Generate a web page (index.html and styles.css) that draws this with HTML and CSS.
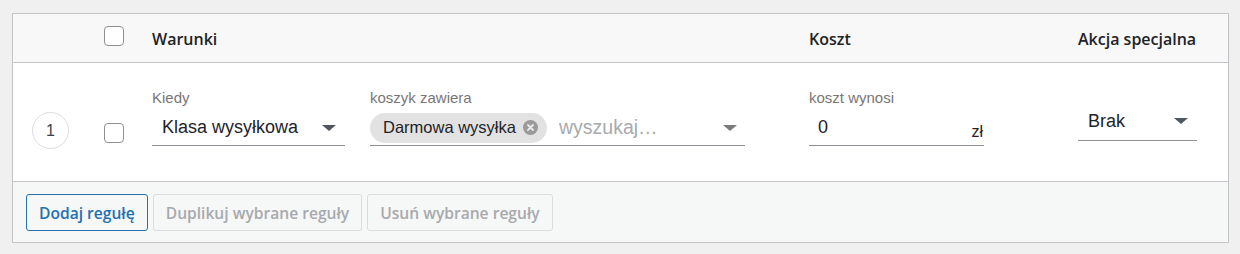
FILE: index.html
```html
<!DOCTYPE html>
<html lang="pl">
<head>
<meta charset="utf-8">
<title>Reguły</title>
<link rel="stylesheet" href="styles.css">
</head>
<body>
<div class="rules">
  <div class="rules-head">
    <div class="c-num"></div>
    <div class="c-check"><span class="cb"></span></div>
    <div class="c-cond">Warunki</div>
    <div class="c-cost">Koszt</div>
    <div class="c-act">Akcja specjalna</div>
  </div>
  <div class="rules-row">
    <div class="c-num"><span class="num">1</span></div>
    <div class="c-check"><span class="cb cb-row"></span></div>
    <div class="c-cond">
      <div class="field f-when">
        <div class="label">Kiedy</div>
        <div class="control">
          <span class="value">Klasa wysyłkowa</span>
          <span class="arrow"></span>
        </div>
      </div>
      <div class="field f-cart">
        <div class="label">koszyk zawiera</div>
        <div class="control">
          <span class="chip">Darmowa wysyłka<span class="chip-x"><svg width="15" height="15" viewBox="0 0 15 15"><circle cx="7.5" cy="7.5" r="7.5" fill="#9a9a9a"/><path d="M5 5 L10 10 M10 5 L5 10" stroke="#ececec" stroke-width="1.8" stroke-linecap="round"/></svg></span></span>
          <span class="placeholder">wyszukaj…</span>
          <span class="arrow arrow-light"></span>
        </div>
      </div>
    </div>
    <div class="c-cost">
      <div class="field f-cost">
        <div class="label">koszt wynosi</div>
        <div class="control">
          <span class="value">0</span>
          <span class="unit">zł</span>
        </div>
      </div>
    </div>
    <div class="c-act">
      <div class="field f-act">
        <div class="control">
          <span class="value">Brak</span>
          <span class="arrow"></span>
        </div>
      </div>
    </div>
  </div>
  <div class="rules-foot">
    <button class="btn btn-primary" type="button">Dodaj regułę</button>
    <button class="btn btn-disabled" type="button">Duplikuj wybrane reguły</button>
    <button class="btn btn-disabled" type="button">Usuń wybrane reguły</button>
  </div>
</div>
</body>
</html>
```
FILE: styles.css
```css
* { box-sizing: border-box; }
html, body { margin: 0; padding: 0; }
body {
  background: #f0f0f1;
  font-family: "Liberation Sans", Arial, sans-serif;
  color: #1d2327;
  padding: 13px 0 0 12px;
}
.rules {
  width: 1217px;
  border: 1px solid #c3c4c7;
  background: #fff;
  box-shadow: 0 1px 1px rgba(0,0,0,.04);
}
.rules-head, .rules-row {
  display: flex;
}
.c-num { width: 91px; flex: none; }
.c-check { width: 48px; flex: none; }
.c-cond { width: 657px; flex: none; }
.c-cost { width: 269px; flex: none; }
.c-act { width: 150px; flex: none; }

.rules-head {
  height: 49px;
  background: #f8f8f8;
  border-bottom: 1px solid #c3c4c7;
  align-items: center;
  font-family: "Open Sans", sans-serif;
  font-weight: 600;
  font-size: 16px;
  line-height: 22px;
  color: #1d2327;
}
.rules-head .c-check { display: flex; align-items: center; margin-top: -5px; }
.rules-head .c-cond, .rules-head .c-cost, .rules-head .c-act { padding-top: 1px; }

.cb {
  display: block;
  width: 20px;
  height: 20px;
  border: 1px solid #8c8f94;
  border-radius: 4px;
  background: #fff;
}
.rules-row {
  height: 119px;
  border-bottom: 1px solid #c3c4c7;
  padding-top: 26px;
  align-items: flex-start;
}
.rules-row .c-num { padding-left: 19px; padding-top: 23px; }
.num {
  display: flex;
  align-items: center;
  justify-content: center;
  width: 37px;
  height: 37px;
  border: 1px solid #dcdcde;
  border-radius: 50%;
  font-size: 16px;
  color: #3c434a;
}
.rules-row .c-check { padding-top: 34px; }

.rules-row .c-cond { display: flex; gap: 25px; }
.field { display: flex; flex-direction: column; }
.f-when { width: 193px; }
.f-cart { width: 375px; }
.f-cost { width: 175px; }
.f-act { width: 119px; margin-top: 13px; }

.label {
  font-size: 15px;
  line-height: 17px;
  color: #7b7676;
  margin-bottom: 1px;
}
.control {
  height: 39px;
  border-bottom: 1px solid #8c8f94;
  display: flex;
  align-items: center;
  padding: 0 9px 0 10px;
  font-size: 18px;
  line-height: 21px;
  color: #1d2327;
}
.f-when .control .value { padding-top: 2px; }
.value { flex: 1; }
.arrow {
  width: 0;
  height: 0;
  border-left: 7px solid transparent;
  border-right: 7px solid transparent;
  border-top: 6px solid #50575e;
  margin-top: 3px;
}
.f-act .arrow { margin-top: 0; }
.arrow-light { border-top-color: #7a7a7a; }

.f-cart .control { padding-left: 0; padding-right: 8px; }
.chip {
  display: flex;
  align-items: center;
  height: 30px;
  border-radius: 15px;
  background: #e2e2e2;
  padding: 0 9px 0 13px;
  font-size: 16.5px;
  color: #1d2327;
  margin-top: 3px;
}
.chip-x { display: flex; margin-left: 7px; }
.placeholder {
  flex: 1;
  margin-left: 12px;
  color: #a7aaad;
  font-size: 19.5px;
  margin-top: 2px;
}

.f-cost .control { padding: 0 1px 0 9px; align-items: center; }
.f-cost .value { padding-top: 2px; }
.unit {
  align-self: flex-end;
  font-size: 16px;
  line-height: 18px;
  margin-bottom: 4px;
  color: #1d2327;
}

.rules-foot {
  background: #f6f7f7;
  display: flex;
  gap: 5px;
  padding: 12px 13px 11px;
}
.btn {
  height: 37px;
  padding: 0 12px;
  border-radius: 3px;
  font-family: "Open Sans", sans-serif;
  font-weight: 600;
  font-size: 15.6px;
  background: #f6f7f7;
  cursor: pointer;
}
.btn-primary {
  border: 1px solid #2271b1;
  color: #2271b1;
}
.btn-disabled {
  border: 1px solid #dcdcde;
  color: #a7aaad;
}
```
